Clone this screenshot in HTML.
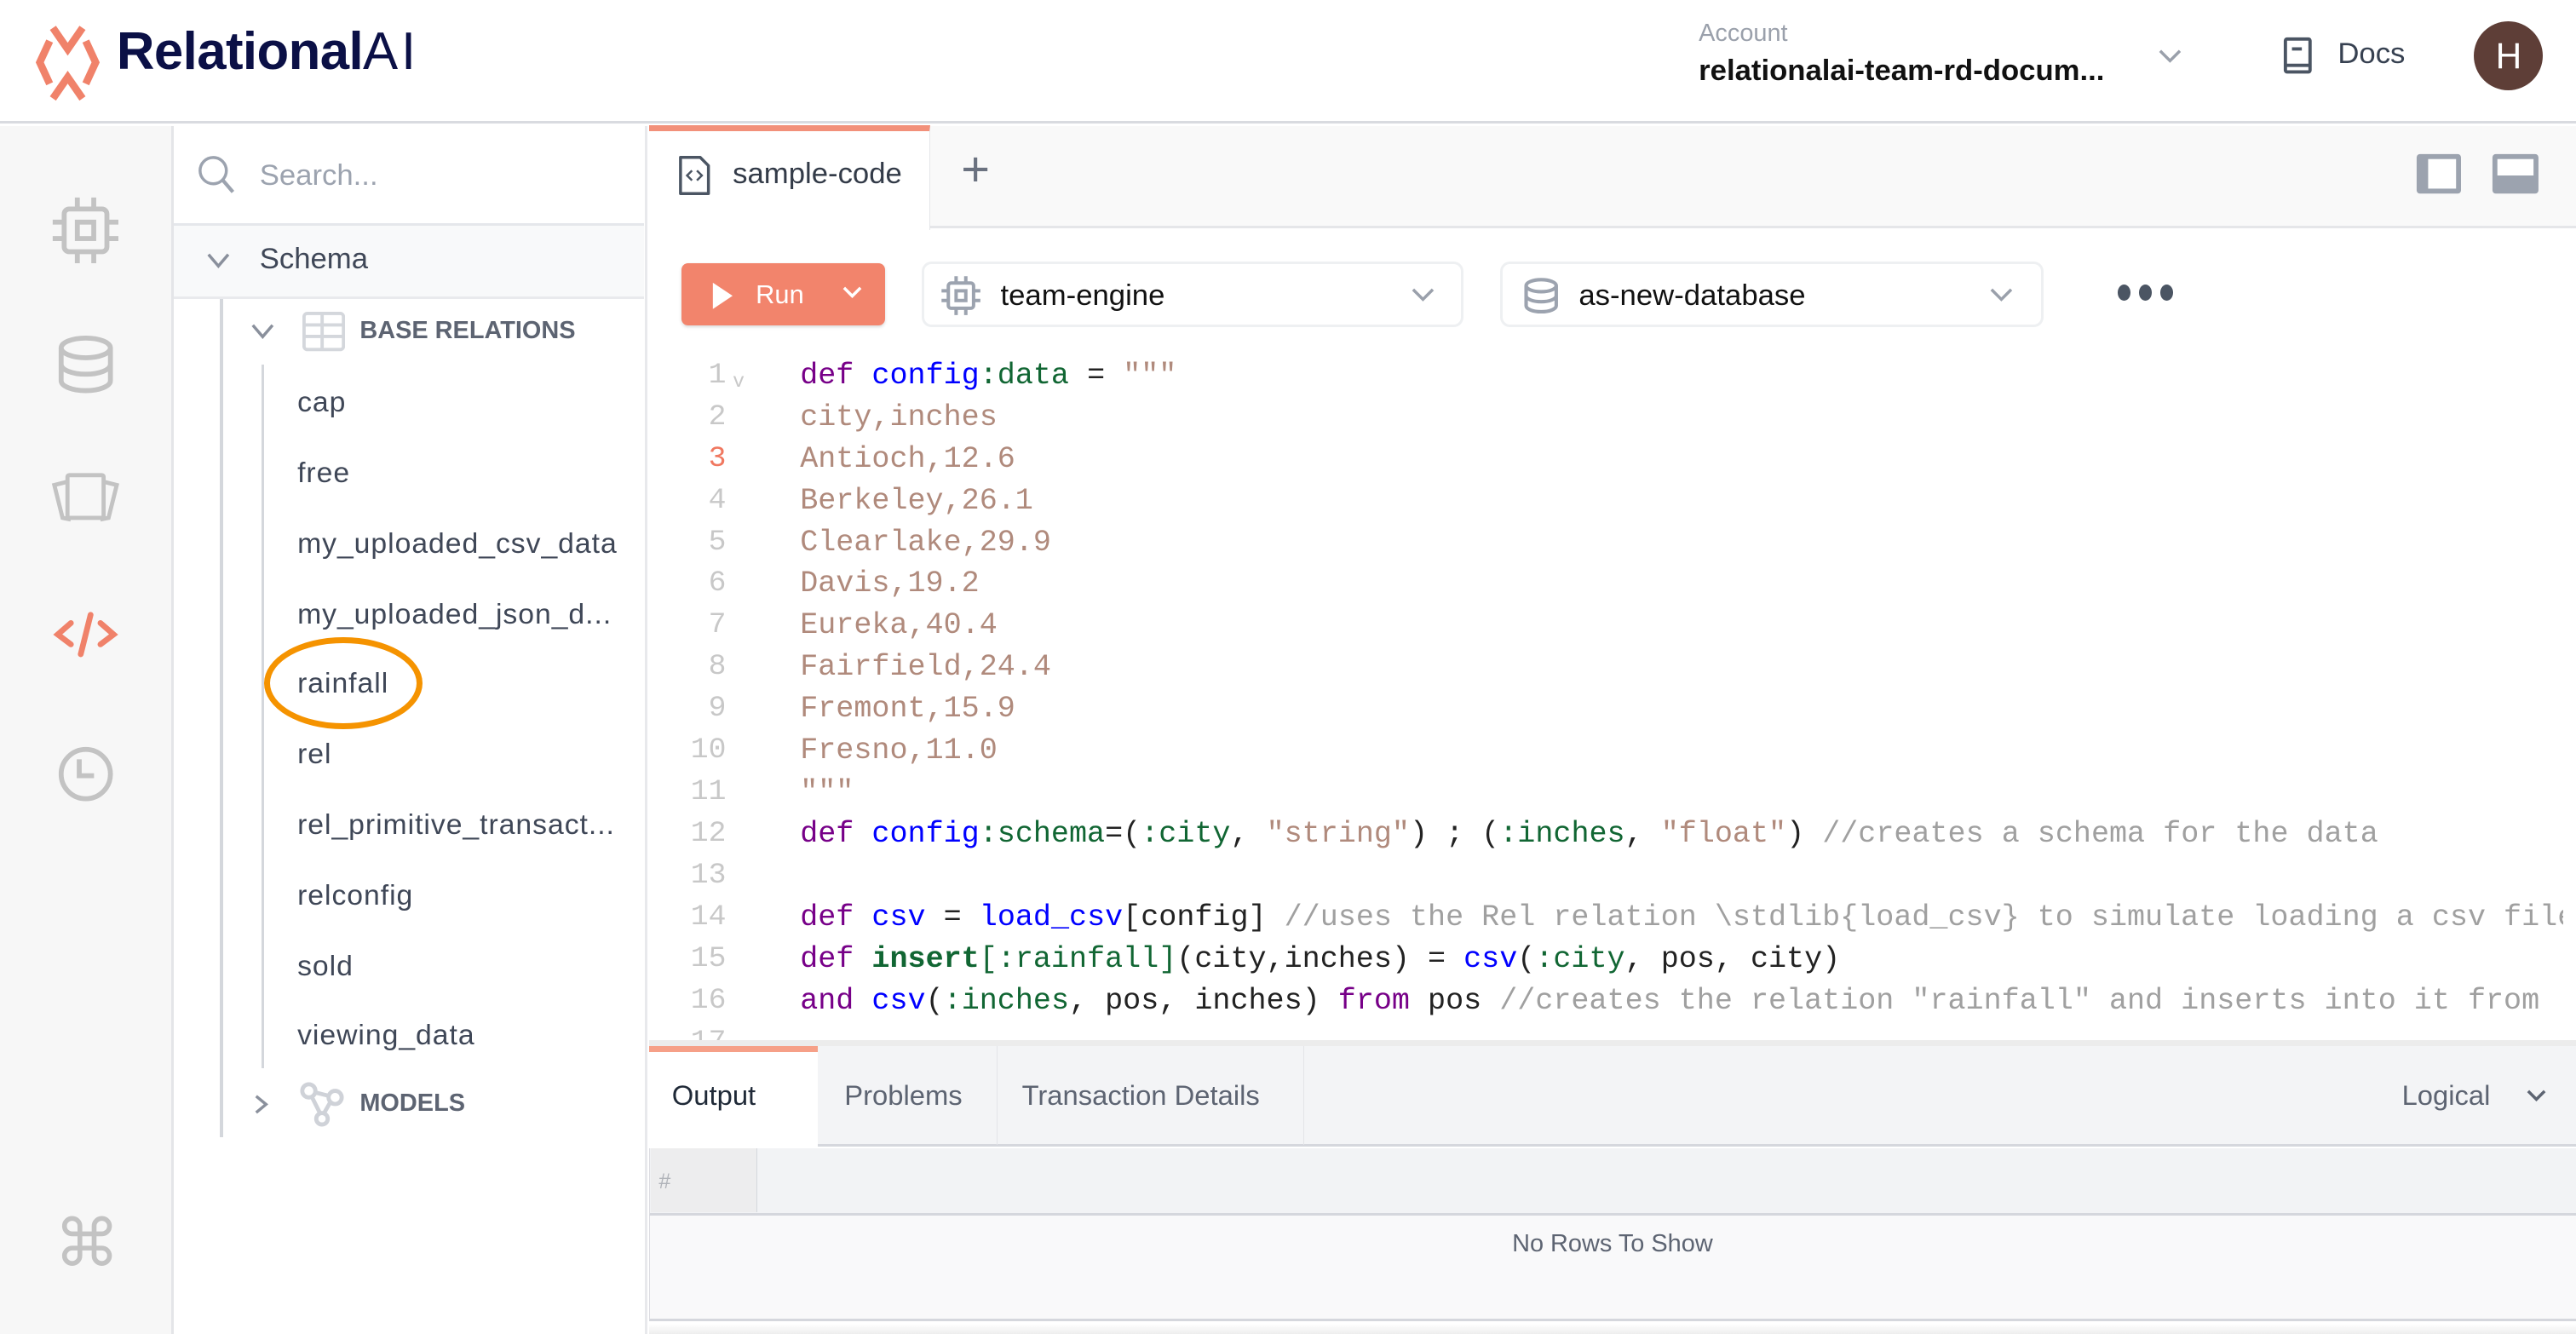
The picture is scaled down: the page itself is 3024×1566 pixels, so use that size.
<!DOCTYPE html>
<html><head><meta charset="utf-8"><style>
*{box-sizing:border-box;margin:0;padding:0}
html,body{width:3024px;height:1566px;overflow:hidden;background:#fff}
#r{zoom:1.92857;width:1568px;height:812px;position:relative;font-family:"Liberation Sans",sans-serif;color:#374151}
.a{position:absolute}
.code{font-family:"Liberation Mono",monospace;font-size:18px;line-height:25.4px;white-space:pre}
.k{color:#770088}.b{color:#0000ff}.g{color:#116633}.s{color:#b08a7c}.c{color:#a0a0a0}.n{color:#222}
.ln{position:absolute;left:410px;width:32px;text-align:right;color:#c8c8c8}
.item{position:absolute;left:181px;font-size:17.5px;letter-spacing:0.5px;color:#3f4757}
</style></head><body><div id="r">
<!-- header -->
<div class="a" style="left:0;top:0;width:1568px;height:75px;background:#fff;border-bottom:2px solid #d9dbe0"></div>
<svg class="a" style="left:24px;top:32px" width="58" height="66" viewBox="0 0 58 66" style="overflow:visible">
</svg>
<svg class="a" style="left:25px;top:32px" width="58" height="66" viewBox="0 0 58 66"></svg>
<svg class="a" style="left:24px;top:32px" width="60" height="66" viewBox="0 0 60 66"></svg>
<svg class="a" style="left:24px;top:32px" width="1" height="1"></svg>
<svg class="a" style="left:24px;top:32px" width="1" height="1"></svg>
<svg class="a" style="left:24px;top:32px" width="1" height="1"></svg>
<svg class="a" style="left:26px;top:33px" width="58" height="66" viewBox="0 0 58 66"></svg>
<svg class="a" style="left:25px;top:33px" width="1" height="1"></svg>
<svg class="a" style="left:25px;top:33px" width="1" height="1"></svg>
<svg class="a" style="left:25px;top:33px" width="1" height="1"></svg>
<svg class="a" style="left:25px;top:33px" width="1" height="1"></svg>
<svg class="a" style="left:25px;top:33px" width="1" height="1"></svg>
<svg class="a" style="left:25px;top:33px" width="1" height="1"></svg>
<svg class="a" style="left:25px;top:33px" width="1" height="1"></svg>
<svg class="a" style="left:25px;top:33px" width="1" height="1"></svg>
<svg class="a" style="left:25px;top:33px" width="1" height="1"></svg>
<svg class="a" style="left:26px;top:33px" width="1" height="1"></svg>
<svg class="a" style="left:25px;top:33px" width="1" height="1"></svg>
<svg class="a" style="left:26px;top:33px" width="1" height="1"></svg>
<svg class="a" style="left:25px;top:33px" width="1" height="1"></svg>
<svg class="a" style="left:25px;top:33px" width="1" height="1"></svg>
<svg class="a" style="left:24px;top:33px" width="1" height="1"></svg>
<svg class="a" style="left:24px;top:33px" width="1" height="1"></svg>
<svg class="a" style="left:24px;top:33px" width="1" height="1"></svg>
<svg class="a" style="left:26px;top:33px" width="1" height="1"></svg>
<svg class="a" style="left:20px;top:13px" width="64" height="50" viewBox="0 0 64 50">
<g fill="none" stroke="#f0826a" stroke-width="4.5" stroke-linejoin="miter">
<path d="M12 4l9 13 9-13"/><path d="M12 47l9-13 9 13"/><path d="M10 12L4 25l6 13"/><path d="M32 12l6 13-6 13"/></g></svg>
<div class="a" style="left:71px;top:13px;font-size:32px;font-weight:bold;color:#0b1046;letter-spacing:-0.3px">Relational<span style="font-weight:normal;letter-spacing:2px">AI</span></div>
<div class="a" style="left:1034px;top:12px;font-size:15px;color:#9aa0ab">Account</div>
<div class="a" style="left:1034px;top:33px;font-size:18px;font-weight:bold;color:#111">relationalai-team-rd-docum...</div>
<svg class="a" style="left:1313px;top:28px" width="16" height="12"><path d="M2 3l6 6 6-6" stroke="#9aa0ab" stroke-width="1.8" fill="none"/></svg>
<svg class="a" style="left:1389px;top:22px" width="20" height="26"><rect x="2" y="2" width="15" height="20" rx="1" fill="none" stroke="#4b5563" stroke-width="2"/><line x1="2" y1="18" x2="17" y2="18" stroke="#4b5563" stroke-width="2"/><line x1="6" y1="8" x2="12" y2="8" stroke="#4b5563" stroke-width="2"/></svg>
<div class="a" style="left:1423px;top:23px;font-size:18px;color:#374151">Docs</div>
<div class="a" style="left:1506px;top:13px;width:42px;height:42px;border-radius:50%;background:#5e3e37;color:#fff;font-size:22px;text-align:center;line-height:42px">H</div>
<!-- left rail -->
<div class="a" style="left:0;top:77px;width:106px;height:735px;background:#f7f7f7;border-right:2px solid #e4e5e8"></div>
<svg class="a" style="left:30px;top:118px" width="44" height="44" viewBox="0 0 44 44" fill="none" stroke="#c3c3c3" stroke-width="3"><rect x="9" y="9" width="26" height="26" rx="3"/><rect x="17" y="17" width="10" height="10"/><path d="M17 2v7M27 2v7M17 35v7M27 35v7M2 17h7M2 27h7M35 17h7M35 27h7"/></svg>
<svg class="a" style="left:34px;top:204px" width="36" height="36" viewBox="0 0 36 36" fill="none" stroke="#c3c3c3" stroke-width="3"><ellipse cx="18" cy="8" rx="15" ry="6"/><path d="M3 8v20c0 3.3 6.7 6 15 6s15-2.7 15-6V8M3 18c0 3.3 6.7 6 15 6s15-2.7 15-6"/></svg>
<svg class="a" style="left:30px;top:286px" width="44" height="36" viewBox="0 0 44 36" fill="none" stroke="#c3c3c3" stroke-width="2.5"><rect x="11" y="3" width="22" height="26" rx="1"/><path d="M11 7L3 9l5 20 5 1M33 7l8 2-5 20-5 1"/></svg>
<svg class="a" style="left:32px;top:370px" width="40" height="32" viewBox="0 0 40 32" fill="none" stroke="#f0826a" stroke-width="3.5" stroke-linecap="round"><path d="M11 9L3 16l8 6M29 9l8 7-8 6M23 4l-6 24"/></svg>
<svg class="a" style="left:34px;top:453px" width="36" height="36" viewBox="0 0 36 36" fill="none" stroke="#c3c3c3" stroke-width="3"><circle cx="18" cy="18" r="15"/><path d="M14 9v10h9"/></svg>
<div class="a" style="left:33px;top:732px;font-size:40px;color:#c3c3c3;line-height:50px">⌘</div>
<!-- tree -->
<div class="a" style="left:106px;top:77px;width:288px;height:735px;background:#fff;border-right:2px solid #e8e9ec"></div>
<svg class="a" style="left:120px;top:94px" width="26" height="28"><circle cx="10" cy="10" r="8" fill="none" stroke="#9ca3af" stroke-width="1.8"/><path d="M16 16l6 7" stroke="#9ca3af" stroke-width="2.2"/></svg>
<div class="a" style="left:158px;top:97px;font-size:18px;color:#9ca3af">Search...</div>
<div class="a" style="left:106px;top:136px;width:286px;height:46px;background:#f8f9fa;border-top:2px solid #e5e7eb;border-bottom:2px solid #e9eaed"></div>
<svg class="a" style="left:124px;top:152px" width="18" height="14"><path d="M3 3l6 7 6-7" stroke="#8a909c" stroke-width="1.8" fill="none"/></svg>
<div class="a" style="left:158px;top:148px;font-size:18px;color:#3f4757">Schema</div>
<div class="a" style="left:134px;top:182px;width:2px;height:510px;background:#d4d7dc"></div>
<div class="a" style="left:159px;top:222px;width:2px;height:428px;background:#d4d7dc"></div>
<svg class="a" style="left:151px;top:195px" width="18" height="14"><path d="M3 3l6 7 6-7" stroke="#8a909c" stroke-width="1.8" fill="none"/></svg>
<svg class="a" style="left:184px;top:190px" width="26" height="24"><rect x="1" y="1" width="24" height="22" rx="2" fill="none" stroke="#d4d7dc" stroke-width="2"/><path d="M1 8h24M1 15h24M12 1v22" stroke="#d4d7dc" stroke-width="2"/></svg>
<div class="a" style="left:219px;top:193px;font-size:15px;font-weight:bold;color:#5d6472">BASE RELATIONS</div>
<div class="item" style="top:235px">cap</div>
<div class="item" style="top:278px">free</div>
<div class="item" style="top:321px">my_uploaded_csv_data</div>
<div class="item" style="top:364px">my_uploaded_json_d...</div>
<div class="item" style="top:406px">rainfall</div>
<div class="item" style="top:449px">rel</div>
<div class="item" style="top:492px">rel_primitive_transact...</div>
<div class="item" style="top:535px">relconfig</div>
<div class="item" style="top:578px">sold</div>
<div class="item" style="top:620px">viewing_data</div>
<div class="a" style="left:161px;top:388px;width:96px;height:56px;border:4px solid #f59300;border-radius:50%"></div>
<svg class="a" style="left:152px;top:664px" width="14" height="16"><path d="M4 3l6 5-6 5" stroke="#8a909c" stroke-width="1.8" fill="none"/></svg>
<svg class="a" style="left:182px;top:658px" width="28" height="28" viewBox="0 0 28 28" fill="none" stroke="#cfd2d8" stroke-width="2.5"><circle cx="6" cy="6" r="4"/><circle cx="22" cy="10" r="4"/><circle cx="14" cy="23" r="3.5"/><path d="M10 7l8 2M8 10l5 10M19 13l-4 7"/></svg>
<div class="a" style="left:219px;top:663px;font-size:15px;font-weight:bold;color:#5d6472">MODELS</div>
<!-- tab bar -->
<div class="a" style="left:395px;top:77px;width:1173px;height:62px;background:#f9f9f9;border-bottom:2px solid #e5e6e9"></div>
<div class="a" style="left:395px;top:76px;width:171px;height:64px;background:#fff;border-top:4px solid #f2907a;border-right:1px solid #e5e6e9"></div>
<svg class="a" style="left:412px;top:93px" width="22" height="28"><path d="M2 3h12l5 5v17H2z" fill="none" stroke="#4b5563" stroke-width="1.8" stroke-linejoin="round"/><path d="M9 11l-3 3 3 3M12 11l3 3-3 3" stroke="#4b5563" stroke-width="1.3" fill="none"/></svg>
<div class="a" style="left:446px;top:96px;font-size:18px;color:#333b48">sample-code</div>
<div class="a" style="left:585px;top:86px;font-size:30px;color:#6b7280;font-weight:300">+</div>
<svg class="a" style="left:1470px;top:93px" width="30" height="26"><rect x="1" y="1" width="27" height="24" rx="2" fill="#9ca3af"/><rect x="8" y="4" width="17" height="18" fill="#fff"/></svg>
<svg class="a" style="left:1516px;top:93px" width="30" height="26"><rect x="1" y="1" width="28" height="24" rx="2" fill="#9ca3af"/><rect x="4" y="4" width="22" height="10" fill="#fff"/></svg>
<!-- toolbar -->
<div class="a" style="left:415px;top:160px;width:124px;height:38px;background:#f2846c;border-radius:4px;box-shadow:0 1px 2px rgba(0,0,0,.15)"></div>
<svg class="a" style="left:432px;top:170px" width="16" height="20"><path d="M2 2l12 8-12 8z" fill="#fff"/></svg>
<div class="a" style="left:460px;top:170px;font-size:16px;color:#fff">Run</div>
<svg class="a" style="left:512px;top:173px" width="14" height="10"><path d="M2 2l5 5 5-5" stroke="#fff" stroke-width="1.8" fill="none"/></svg>
<div class="a" style="left:561px;top:159px;width:330px;height:40px;border:2px solid #eef0f2;border-radius:6px"></div>
<svg class="a" style="left:572px;top:167px" width="26" height="26" viewBox="0 0 44 44" fill="none" stroke="#9ca3af" stroke-width="3.5"><rect x="9" y="9" width="26" height="26" rx="3"/><rect x="17" y="17" width="10" height="10"/><path d="M17 2v7M27 2v7M17 35v7M27 35v7M2 17h7M2 27h7M35 17h7M35 27h7"/></svg>
<div class="a" style="left:609px;top:170px;font-size:18px;color:#111">team-engine</div>
<svg class="a" style="left:858px;top:174px" width="16" height="12"><path d="M2 2l6 6 6-6" stroke="#9aa0ab" stroke-width="1.8" fill="none"/></svg>
<div class="a" style="left:913px;top:159px;width:331px;height:40px;border:2px solid #eef0f2;border-radius:6px"></div>
<svg class="a" style="left:927px;top:168px" width="22" height="24" viewBox="0 0 36 36" fill="none" stroke="#9ca3af" stroke-width="3.5"><ellipse cx="18" cy="8" rx="15" ry="6"/><path d="M3 8v20c0 3.3 6.7 6 15 6s15-2.7 15-6V8M3 18c0 3.3 6.7 6 15 6s15-2.7 15-6"/></svg>
<div class="a" style="left:961px;top:170px;font-size:18px;color:#111">as-new-database</div>
<svg class="a" style="left:1210px;top:174px" width="16" height="12"><path d="M2 2l6 6 6-6" stroke="#9aa0ab" stroke-width="1.8" fill="none"/></svg>
<div class="a" style="left:1289px;top:173px;display:flex;gap:5px"><i style="width:8px;height:10px;border-radius:50%;background:#4b5563"></i><i style="width:8px;height:10px;border-radius:50%;background:#4b5563"></i><i style="width:8px;height:10px;border-radius:50%;background:#4b5563"></i></div>
<!-- code -->
<div class="a code" style="left:0;top:216px;width:1560px;height:417px;overflow:hidden">
<div class="ln" style="top:0">1</div><div class="ln" style="top:25.4px;">2</div><div class="ln" style="top:50.8px;color:#f07860">3</div><div class="ln" style="top:76.2px">4</div><div class="ln" style="top:101.6px">5</div><div class="ln" style="top:127px">6</div><div class="ln" style="top:152.4px">7</div><div class="ln" style="top:177.8px">8</div><div class="ln" style="top:203.2px">9</div><div class="ln" style="top:228.6px">10</div><div class="ln" style="top:254px">11</div><div class="ln" style="top:279.4px">12</div><div class="ln" style="top:304.8px">13</div><div class="ln" style="top:330.2px">14</div><div class="ln" style="top:355.6px">15</div><div class="ln" style="top:381px">16</div><div class="ln" style="top:406.4px">17</div>
<div class="a" style="left:446px;top:4px;font-size:12px;color:#c8c8c8">v</div>
<div class="a" style="left:487px;top:0;font-size:18.2px"><span class="k">def</span> <span class="b">config</span><span class="g">:data</span> <span class="n">=</span> <span class="s">"""</span>
<span class="s">city,inches</span>
<span class="s">Antioch,12.6</span>
<span class="s">Berkeley,26.1</span>
<span class="s">Clearlake,29.9</span>
<span class="s">Davis,19.2</span>
<span class="s">Eureka,40.4</span>
<span class="s">Fairfield,24.4</span>
<span class="s">Fremont,15.9</span>
<span class="s">Fresno,11.0</span>
<span class="s">"""</span>
<span class="k">def</span> <span class="b">config</span><span class="g">:schema</span><span class="n">=(</span><span class="g">:city</span><span class="n">, </span><span class="s">"string"</span><span class="n">) ; (</span><span class="g">:inches</span><span class="n">, </span><span class="s">"float"</span><span class="n">) </span><span class="c">//creates a schema for the data</span>

<span class="k">def</span> <span class="b">csv</span> <span class="n">=</span> <span class="b">load_csv</span><span class="n">[config] </span><span class="c">//uses the Rel relation \stdlib{load_csv} to simulate loading a csv file</span>
<span class="k">def</span> <span class="g" style="font-weight:bold">insert</span><span class="g">[:rainfall]</span><span class="n">(city,inches) = </span><span class="b">csv</span><span class="n">(</span><span class="g">:city</span><span class="n">, pos, city)</span>
<span class="k">and</span> <span class="b">csv</span><span class="n">(</span><span class="g">:inches</span><span class="n">, pos, inches) </span><span class="k">from</span><span class="n"> pos </span><span class="c">//creates the relation "rainfall" and inserts into it from</span></div>
</div>
<!-- output panel -->
<div class="a" style="left:395px;top:633px;width:1173px;height:4px;background:#ececec"></div>
<div class="a" style="left:395px;top:637px;width:1173px;height:61px;background:#f3f4f6;border-bottom:2px solid #d5d7dd"></div>
<div class="a" style="left:395px;top:637px;width:103px;height:61px;background:#fff;border-top:4px solid #f6a088"></div>
<div class="a" style="left:409px;top:657px;font-size:17px;color:#1f2937">Output</div>
<div class="a" style="left:498px;top:637px;width:109px;height:60px;border-right:1px solid #e3e4e8"></div>
<div class="a" style="left:514px;top:657px;font-size:17px;color:#5d6472">Problems</div>
<div class="a" style="left:607px;top:637px;width:187px;height:60px;border-right:1px solid #e3e4e8"></div>
<div class="a" style="left:622px;top:657px;font-size:17px;color:#5d6472">Transaction Details</div>
<div class="a" style="left:1462px;top:657px;font-size:17px;color:#5d6472">Logical</div>
<svg class="a" style="left:1537px;top:662px" width="14" height="10"><path d="M2 2l5 5 5-5" stroke="#5d6472" stroke-width="1.8" fill="none"/></svg>
<div class="a" style="left:395px;top:699px;width:1173px;height:41px;background:#f2f3f5;border-left:1px solid #dcdde2;border-bottom:2px solid #d5d7dd"></div>
<div class="a" style="left:396px;top:699px;width:65px;height:39px;background:#ededee;border-right:1px solid #d5d7dd"></div>
<div class="a" style="left:401px;top:712px;font-size:13px;color:#b0b3b9">#</div>
<div class="a" style="left:395px;top:740px;width:1173px;height:64px;background:#f9f9fa;border-left:1px solid #dcdde2;border-bottom:2px solid #d5d7dd"></div>
<div class="a" style="left:395px;top:749px;width:1173px;text-align:center;font-size:15px;color:#5d6472">No Rows To Show</div>
<div class="a" style="left:395px;top:806px;width:1173px;height:6px;background:linear-gradient(#fff,#eee)"></div>
</div></body></html>
